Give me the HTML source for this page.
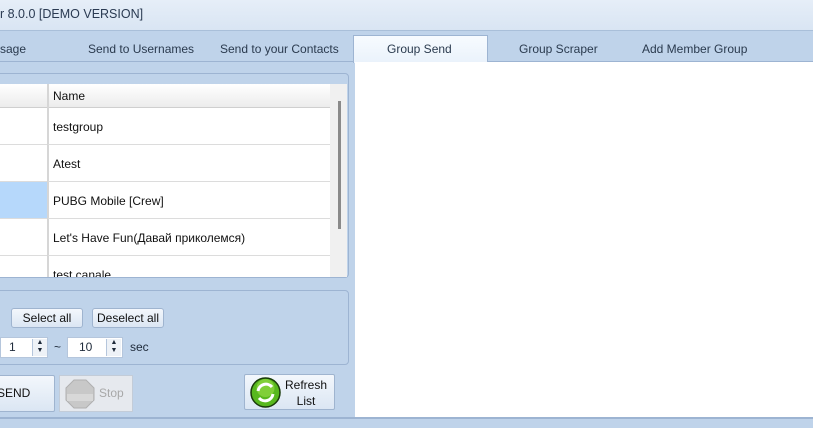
<!DOCTYPE html>
<html><head><meta charset="utf-8"><style>
*{margin:0;padding:0;box-sizing:border-box}
body{width:813px;height:428px;overflow:hidden;background:#bfd3ea;font-family:"Segoe UI","Liberation Sans","DejaVu Sans",sans-serif;font-size:12px;color:#1e2a3a;position:relative}
.a{position:absolute}
.title{left:0;top:0;width:813px;height:31px;background:linear-gradient(#e6eef8,#d9e5f3);border-bottom:1px solid #a9bfd9}
.tab{top:42px;font-size:12px;color:#2a3a4e}
.btn{background:linear-gradient(#f3f7fc,#dbe6f3);border:1px solid #9fb4cf;border-radius:3px;text-align:center;font-size:12px;color:#111}
.cell{position:absolute;left:48px;width:282px;height:37px;border-bottom:1px solid #dcdcdc;padding:12px 0 0 5px;font-size:12px;color:#111}
.lc{position:absolute;left:0;width:47px;height:37px;border-bottom:1px solid #dcdcdc}
</style></head><body>
<div class="a title"><span class="a" style="left:0;top:7px;font-size:12.5px;color:#2a3a52">r 8.0.0 [DEMO VERSION]</span></div>
<div class="a" style="left:0;top:61px;width:813px;height:1px;background:#9db4d2"></div>
<span class="a tab" style="left:0">sage</span>
<span class="a tab" style="left:88px">Send to Usernames</span>
<span class="a tab" style="left:220px">Send to your Contacts</span>
<div class="a" style="left:353px;top:35px;width:135px;height:28px;background:linear-gradient(#f7fbff,#eaf2fb);border:1px solid #9db4d2;border-bottom:none"></div>
<span class="a tab" style="left:387px">Group Send</span>
<span class="a tab" style="left:519px">Group Scraper</span>
<span class="a tab" style="left:642px">Add Member Group</span>
<div class="a" style="left:355px;top:62px;width:458px;height:355px;background:#fff"></div>
<div class="a" style="left:0;top:417px;width:813px;height:2px;background:#9db4d2"></div>
<div class="a" style="left:-5px;top:73px;width:354px;height:205px;border:1px solid #9db4d2;border-radius:4px"></div>
<div class="a" style="left:0;top:84px;width:347px;height:193px;background:#fff;overflow:hidden">
 <div class="a" style="left:0;top:0;width:330px;height:24px;background:linear-gradient(#fff,#ececec);border-bottom:1px solid #cfcfcf"></div>
 <div class="a" style="left:47px;top:0;width:2px;height:193px;background:#d6d6d6"></div>
 <span class="a" style="left:53px;top:5px;font-size:12px;color:#111">Name</span>
 <div class="lc" style="top:24px"></div><div class="cell" style="top:24px">testgroup</div>
 <div class="lc" style="top:61px"></div><div class="cell" style="top:61px">Atest</div>
 <div class="lc" style="top:98px;background:#b6d8fb"></div><div class="cell" style="top:98px">PUBG Mobile [Crew]</div>
 <div class="lc" style="top:135px"></div><div class="cell" style="top:135px">Let's Have Fun(Давай приколемся)</div>
 <div class="lc" style="top:172px"></div><div class="cell" style="top:172px">test canale</div>
 <div class="a" style="left:330px;top:0;width:17px;height:193px;background:#f0f0f0"></div>
 <div class="a" style="left:338px;top:17px;width:3px;height:128px;background:#8a8a8a"></div>
</div>
<div class="a" style="left:-5px;top:290px;width:354px;height:75px;border:1px solid #9db4d2;border-radius:4px"></div>
<div class="a btn" style="left:11px;top:308px;width:72px;height:20px;line-height:18px">Select all</div>
<div class="a btn" style="left:92px;top:308px;width:72px;height:20px;line-height:18px">Deselect all</div>
<div class="a" style="left:0;top:337px;width:48px;height:21px;background:#fff;border:1px solid #b5c6dc"><span class="a" style="left:8px;top:2px">1</span><div class="a" style="left:31px;top:1px;width:15px;height:17px;background:#eef2f7;border-left:1px solid #b5c6dc;font-size:7px;line-height:8px;text-align:center">▲<br>▼</div></div>
<span class="a" style="left:54px;top:340px">~</span>
<div class="a" style="left:67px;top:337px;width:56px;height:21px;background:#fff;border:1px solid #b5c6dc"><span class="a" style="left:11px;top:2px">10</span><div class="a" style="left:38px;top:1px;width:15px;height:17px;background:#eef2f7;border-left:1px solid #b5c6dc;font-size:7px;line-height:8px;text-align:center">▲<br>▼</div></div>
<span class="a" style="left:130px;top:340px">sec</span>
<div class="a btn" style="left:-4px;top:375px;width:59px;height:37px;line-height:35px;border-radius:2px;text-align:right;padding-right:26px">SEND</div>
<div class="a" style="left:59px;top:375px;width:74px;height:37px;background:#e6e9ee;border:1px solid #c3ccd8">
 <svg class="a" style="left:5px;top:3px" width="30" height="30"><polygon points="9,1 21,1 29,9 29,21 21,29 9,29 1,21 1,9" fill="#c8c8c8" stroke="#b0b0b0"/><rect x="2" y="15" width="26" height="7" fill="#d8d8d8"/></svg>
 <span class="a" style="left:39px;top:10px;color:#a8a8a8">Stop</span></div>
<div class="a btn" style="left:244px;top:374px;width:91px;height:36px;border-radius:2px">
 <svg class="a" style="left:5px;top:2px" width="31" height="31"><circle cx="15.5" cy="15.5" r="14.5" fill="#58b81e" stroke="#1a3a0a" stroke-width="1.5"/><circle cx="15.5" cy="11" r="9" fill="#9bde4a" opacity=".6"/><path d="M8 14a8 8 0 0 1 14-4" stroke="#fff" stroke-width="3" fill="none"/><path d="M23 17a8 8 0 0 1-14 4" stroke="#fff" stroke-width="3" fill="none"/></svg>
 <span class="a" style="left:40px;top:2px;line-height:16px;text-align:center">Refresh<br>List</span></div>
</body></html>
